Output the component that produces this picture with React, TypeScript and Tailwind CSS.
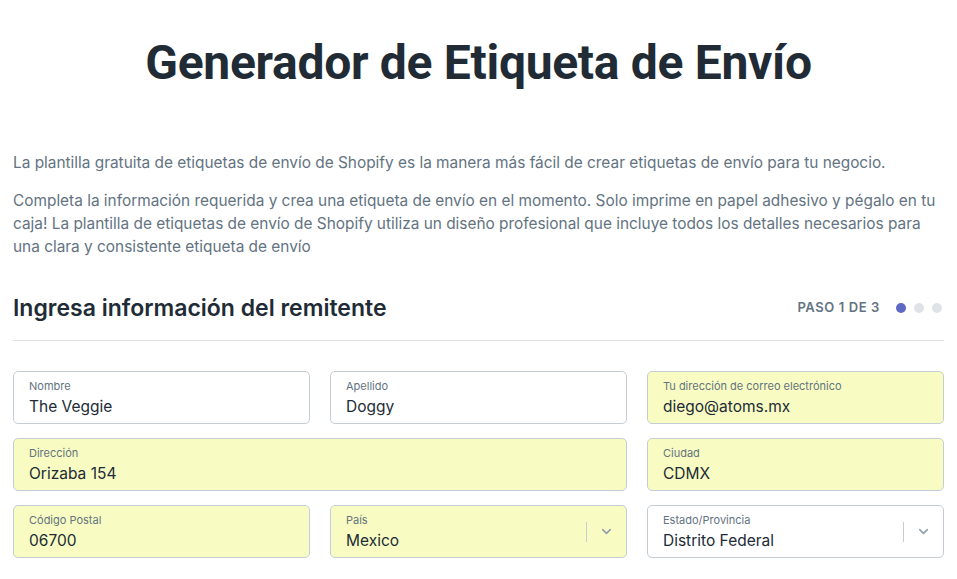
import { ChevronDown } from 'lucide-react';

type FieldProps = {
    label: string;
    value: string;
    filled?: boolean;
    select?: boolean;
    className?: string;
};

function Field({ label, value, filled, select, className }: FieldProps) {
    return (
        <div
            className={`flex h-[53px] items-center rounded-[5px] border border-[#c4cdd5] ${
                filled ? 'bg-[#f9fcc2]' : 'bg-white'
            } ${className ?? ''}`}
        >
            <div className="flex-1 pl-[15px]">
                <div className="text-[11px] leading-[14px] text-[#637381]">{label}</div>
                <div className="mt-[4px] text-[15.5px] leading-[20px] text-[#212b36]">{value}</div>
            </div>
            {select && (
                <div className="flex items-center">
                    <span className="h-[20px] w-px bg-[#c4cdd5]" />
                    <ChevronDown className="mx-[12px] h-[15px] w-[15px] text-[#919eab]" strokeWidth={2.5} />
                </div>
            )}
        </div>
    );
}

export default function App() {
    return (
        <div className="min-h-screen bg-white px-[13px] font-['Inter',sans-serif] text-[#212b36]">
            <h1 className="pt-[33px] text-center font-['Roboto',sans-serif] text-[48px] font-bold leading-[60px] tracking-[-0.3px]">
                Generador de Etiqueta de Envío
            </h1>
            <div className="mt-[58px] space-y-[15px] text-[15.4px] leading-[23px] text-[#637381]">
                <p>
                    La plantilla gratuita de etiquetas de envío de Shopify es la manera más fácil de crear etiquetas de envío para tu negocio.
                </p>
                <p>
                    Completa la información requerida y crea una etiqueta de envío en el momento. Solo imprime en papel adhesivo y pégalo en tu caja! La plantilla de etiquetas de envío de Shopify utiliza un diseño profesional que incluye todos los detalles necesarios para una clara y consistente etiqueta de envío
                </p>
            </div>
            <div className="mt-[34px] flex items-center justify-between border-b border-[#dfe3e8] pb-[16px]">
                <h2 className="text-[23px] font-semibold leading-[32px]">Ingresa información del remitente</h2>
                <div className="flex items-center pr-[2px]">
                    <span className="text-[13px] font-semibold tracking-[0.6px] text-[#637381]">PASO 1 DE 3</span>
                    <div className="ml-[16px] flex gap-[8px]">
                        <span className="h-[10px] w-[10px] rounded-full bg-[#5c6ac4]" />
                        <span className="h-[10px] w-[10px] rounded-full bg-[#dfe3e8]" />
                        <span className="h-[10px] w-[10px] rounded-full bg-[#dfe3e8]" />
                    </div>
                </div>
            </div>
            <div className="mt-[30px] grid grid-cols-3 gap-x-[20px] gap-y-[14px]">
                <Field label="Nombre" value="The Veggie" />
                <Field label="Apellido" value="Doggy" />
                <Field label="Tu dirección de correo electrónico" value="diego@atoms.mx" filled />
                <Field label="Dirección" value="Orizaba 154" filled className="col-span-2" />
                <Field label="Ciudad" value="CDMX" filled />
                <Field label="Código Postal" value="06700" filled />
                <Field label="País" value="Mexico" filled select />
                <Field label="Estado/Provincia" value="Distrito Federal" select />
            </div>
        </div>
    );
}
